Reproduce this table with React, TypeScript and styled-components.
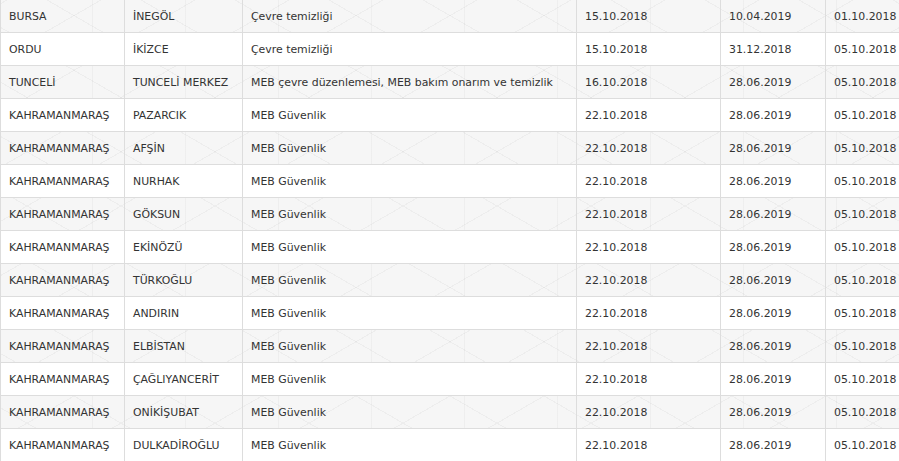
import { styled, createGlobalStyle } from "styled-components";

type Row = {
  city: string;
  town: string;
  job: string;
  start: string;
  end: string;
  posted: string;
};

const rows: Row[] = [
  { city: "BURSA", town: "İNEGÖL", job: "Çevre temizliği", start: "15.10.2018", end: "10.04.2019", posted: "01.10.2018" },
  { city: "ORDU", town: "İKİZCE", job: "Çevre temizliği", start: "15.10.2018", end: "31.12.2018", posted: "05.10.2018" },
  { city: "TUNCELİ", town: "TUNCELİ MERKEZ", job: "MEB çevre düzenlemesi, MEB bakım onarım ve temizlik", start: "16.10.2018", end: "28.06.2019", posted: "05.10.2018" },
  { city: "KAHRAMANMARAŞ", town: "PAZARCIK", job: "MEB Güvenlik", start: "22.10.2018", end: "28.06.2019", posted: "05.10.2018" },
  { city: "KAHRAMANMARAŞ", town: "AFŞİN", job: "MEB Güvenlik", start: "22.10.2018", end: "28.06.2019", posted: "05.10.2018" },
  { city: "KAHRAMANMARAŞ", town: "NURHAK", job: "MEB Güvenlik", start: "22.10.2018", end: "28.06.2019", posted: "05.10.2018" },
  { city: "KAHRAMANMARAŞ", town: "GÖKSUN", job: "MEB Güvenlik", start: "22.10.2018", end: "28.06.2019", posted: "05.10.2018" },
  { city: "KAHRAMANMARAŞ", town: "EKİNÖZÜ", job: "MEB Güvenlik", start: "22.10.2018", end: "28.06.2019", posted: "05.10.2018" },
  { city: "KAHRAMANMARAŞ", town: "TÜRKOĞLU", job: "MEB Güvenlik", start: "22.10.2018", end: "28.06.2019", posted: "05.10.2018" },
  { city: "KAHRAMANMARAŞ", town: "ANDIRIN", job: "MEB Güvenlik", start: "22.10.2018", end: "28.06.2019", posted: "05.10.2018" },
  { city: "KAHRAMANMARAŞ", town: "ELBİSTAN", job: "MEB Güvenlik", start: "22.10.2018", end: "28.06.2019", posted: "05.10.2018" },
  { city: "KAHRAMANMARAŞ", town: "ÇAĞLIYANCERİT", job: "MEB Güvenlik", start: "22.10.2018", end: "28.06.2019", posted: "05.10.2018" },
  { city: "KAHRAMANMARAŞ", town: "ONİKİŞUBAT", job: "MEB Güvenlik", start: "22.10.2018", end: "28.06.2019", posted: "05.10.2018" },
  { city: "KAHRAMANMARAŞ", town: "DULKADİROĞLU", job: "MEB Güvenlik", start: "22.10.2018", end: "28.06.2019", posted: "05.10.2018" },
];

const widths = [124, 118, 334, 144, 105, 105];

const App = (): JSX.Element => {
  return (
    <>
      <GlobalStyle />
      <Wrapper>
        <Table>
          <colgroup>
            {widths.map((w, i) => (
              <col key={i} style={{ width: w }} />
            ))}
          </colgroup>
          <tbody>
            {rows.map((r, i) => (
              <Tr key={i} $striped={i % 2 === 0}>
                <td>{r.city}</td>
                <td>{r.town}</td>
                <td>{r.job}</td>
                <td>{r.start}</td>
                <td>{r.end}</td>
                <td>{r.posted}</td>
              </Tr>
            ))}
          </tbody>
        </Table>
      </Wrapper>
    </>
  );
};

export default App;

const GlobalStyle = createGlobalStyle`
  html, body {
    margin: 0;
    padding: 0;
    overflow: hidden;
    background: #ffffff;
  }
`;

const Wrapper = styled.div`
  width: 899px;
  height: 461px;
  overflow: hidden;
`;

const Table = styled.table`
  margin-top: -1px;
  width: 930px;
  table-layout: fixed;
  border-collapse: collapse;
  font-family: "DejaVu Sans", Verdana, sans-serif;
  font-size: 10.9px;
  color: #333333;

  td {
    height: 33px;
    padding: 0 8px;
    border: 1px solid #dddddd;
    white-space: nowrap;
    vertical-align: middle;
    box-sizing: border-box;
  }
`;

const Tr = styled.tr<{ $striped: boolean }>`
  background-color: ${(p) => (p.$striped ? "#f6f6f6" : "#ffffff")};
  background-image: ${(p) =>
    p.$striped
      ? `repeating-linear-gradient(30deg, transparent 0 46px, rgba(0,0,0,0.035) 46px 47px),
         repeating-linear-gradient(-30deg, transparent 0 46px, rgba(0,0,0,0.035) 46px 47px),
         repeating-linear-gradient(90deg, transparent 0 92px, rgba(0,0,0,0.03) 92px 93px)`
      : "none"};
  background-attachment: fixed;
`;
